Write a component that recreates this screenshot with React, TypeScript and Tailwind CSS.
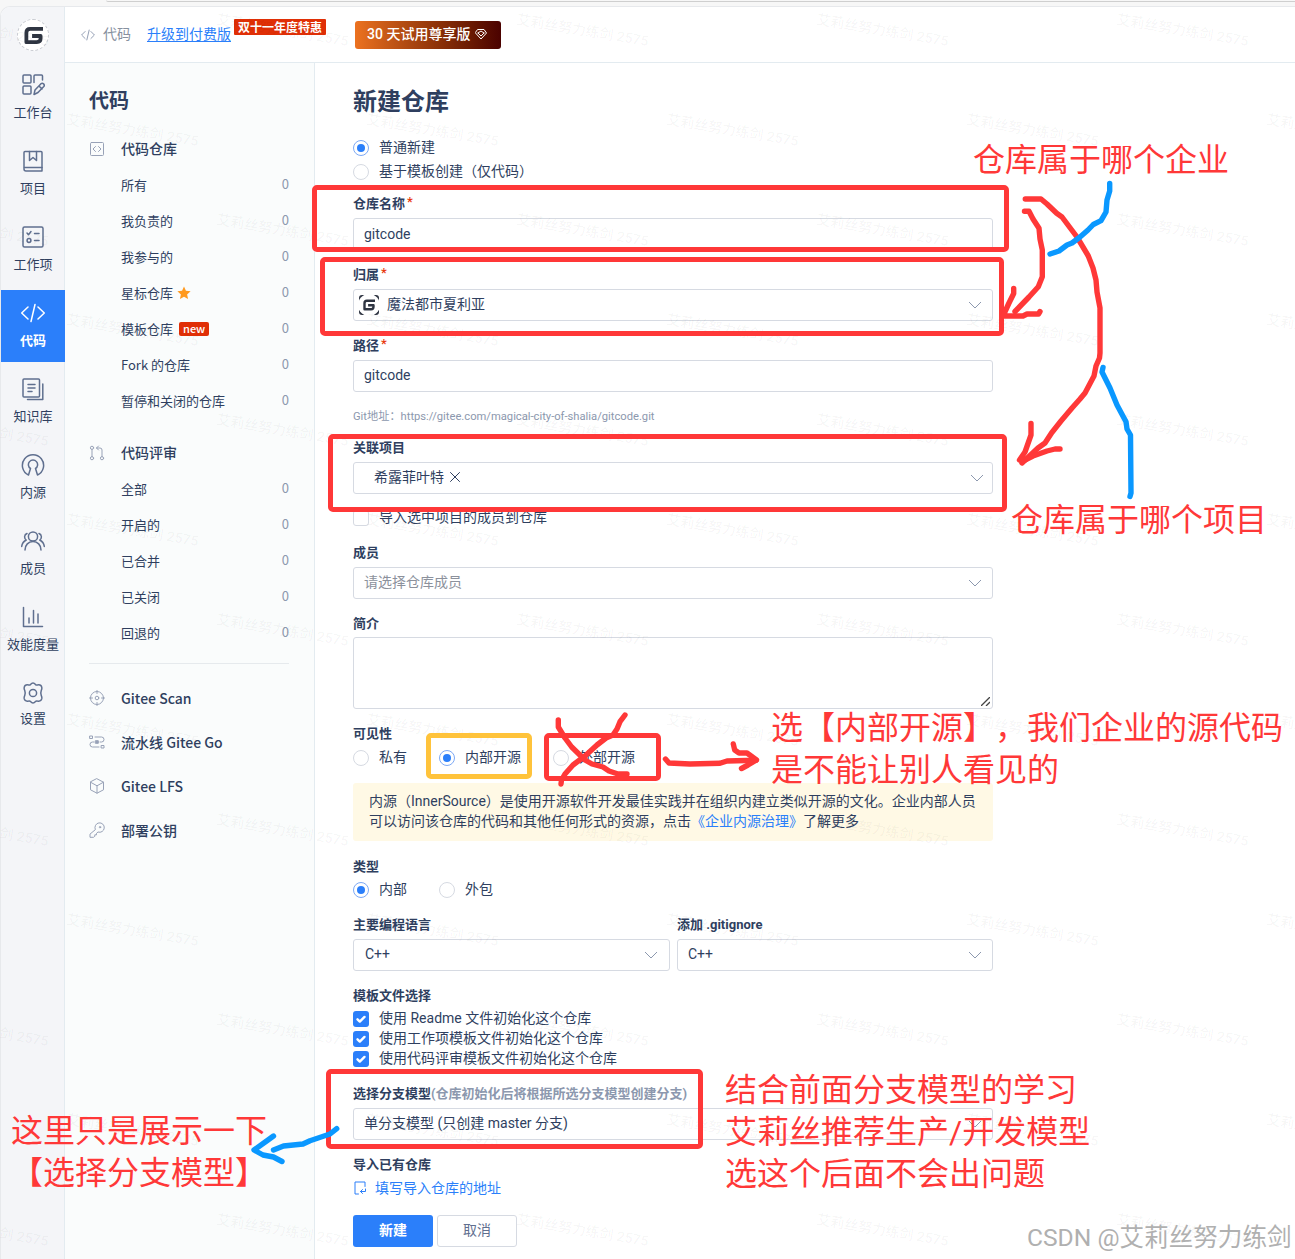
import type { ReactNode } from 'react';
import clsx from 'clsx';

function Glyph({ size, box = 24, width = 1.5, className, children }: { size: number; box?: number; width?: number; className?: string; children: ReactNode }) {
    return (
        <svg
            width={size}
            height={size}
            viewBox={`0 0 ${box} ${box}`}
            fill="none"
            stroke="currentColor"
            strokeWidth={width}
            strokeLinecap="round"
            strokeLinejoin="round"
            className={clsx('shrink-0', className)}
        >
            {children}
        </svg>
    );
}

const railItems = [
    {
        label: '工作台',
        icon: (
            <>
                <rect x="2" y="2" width="8" height="8" rx="1" />
                <path d="M21.5 7V3a1 1 0 0 0-1-1h-6.5a1 1 0 0 0-1 1v6.500" />
                <rect x="2" y="13" width="8" height="8" rx="1" />
                <path d="M13 21.500l1-4.500 6-6.300q1.300-1 2.600.2 1.300 1.300.2 2.600l-5.800 6zM18 13l3 3" />
            </>
        ),
    },
    {
        label: '项目',
        icon: (
            <>
                <path d="M4 2.500h16a1 1 0 0 1 1 1V22H5a2 2 0 0 1-2-2V3.500a1 1 0 0 1 1-1z" />
                <path d="M8.500 2.500v9l3.500-3 3.500 3v-9M3.500 18.500H21" />
            </>
        ),
    },
    {
        label: '工作项',
        icon: (
            <>
                <rect x="2" y="2" width="20" height="20" rx="1.500" />
                <path d="M6 8l1.500 1.700L10 6.500M13.500 8.500H18M13.500 15.500H18" />
                <circle cx="8" cy="15.500" r="1.900" />
            </>
        ),
    },
    {
        label: '代码',
        icon: <path d="M7 6l-6.300 6L7 18M17 6l6.300 6L17 18M14 3.500l-4 17" />,
    },
    {
        label: '知识库',
        icon: (
            <>
                <rect x="2" y="2" width="16.500" height="18" rx="1" />
                <path d="M21.800 7v15.500H6.500M7 7.500h7M7 11h7M7 14.500h4" />
            </>
        ),
    },
    {
        label: '内源',
        icon: <path d="M7.500 22A10.600 10.600 0 1 1 16.500 22l-2-6.500a4.600 4.600 0 1 0-5 0z" />,
    },
    {
        label: '成员',
        icon: (
            <>
                <circle cx="12" cy="7.500" r="4.600" />
                <path d="M4 21c0-5 3.500-8.500 8-8.500s8 3.500 8 8.500M6 4.500c-3 1-3 5-.8 6.500C2.500 12.500 1 14.500.700 17.500M18 4.500c3 1 3 5 .8 6.500 2.700 1.500 4.200 3.500 4.500 6.500" />
            </>
        ),
    },
    {
        label: '效能度量',
        icon: <path d="M2.500 2.500v19h19M8 13v5M12.500 5.500V18M17 9v9" />,
    },
    {
        label: '设置',
        icon: (
            <>
                <path d="M9.500 3.500q2.500-3 5 0 .7.800 1.800.5 3.800-.8 4.500 2.300.3 1.500-.5 3-1 2.700 0 5.400.8 1.500.5 3-.7 3.100-4.500 2.300-1.100-.3-1.800.5-2.500 3-5 0-.7-.800-1.800-.5-3.800.8-4.500-2.300-.3-1.500.5-3 1-2.700 0-5.400-.8-1.500-.5-3 .7-3.100 4.500-2.300 1.100.3 1.800-.5z" />
                <circle cx="12" cy="12" r="3.600" />
            </>
        ),
    },
];

const codeRows = [
    { label: '所有' },
    { label: '我负责的' },
    { label: '我参与的' },
    { label: '星标仓库', star: true },
    { label: '模板仓库', isNew: true },
    { label: 'Fork 的仓库' },
    { label: '暂停和关闭的仓库' },
];

const reviewRows = [{ label: '全部' }, { label: '开启的' }, { label: '已合并' }, { label: '已关闭' }, { label: '回退的' }];

const tools = [
    {
        label: 'Gitee Scan',
        icon: (
            <>
                <circle cx="8" cy="8" r="6.500" />
                <circle cx="8" cy="8" r="1.800" />
                <path d="M8 .5v3M8 12.500v3M.5 8h3M12.500 8h3" />
            </>
        ),
    },
    {
        label: '流水线 Gitee Go',
        icon: (
            <>
                <path d="M1 2h2.500v2.500H1zM12.500 11.500H15V14h-2.500zM6 3h6.500a2.500 2.500 0 0 1 0 5H11M10 13H3.500a2.500 2.500 0 0 1 0-5H5" />
                <rect x="6.700" y="6.700" width="2.600" height="2.600" fill="currentColor" />
            </>
        ),
    },
    {
        label: 'Gitee LFS',
        icon: <path d="M8 .8l6.500 3.400v7.600L8 15.200l-6.500-3.400V4.200zM1.500 4.200L8 7.800l6.500-3.600M8 7.800v7.400" />,
    },
    {
        label: '部署公钥',
        icon: (
            <>
                <path d="M6.200 7.300A4.700 4.700 0 1 1 9 10L7.500 11.300v1.500H5.800v1.500L4.500 15.300H1v-2.800z" />
                <circle cx="11" cy="5.200" r=".7" />
            </>
        ),
    },
];

function Logo({ className }: { className?: string }) {
    return (
        <svg viewBox="0 0 20 20" className={className} fill="none" stroke="#2f3542" strokeWidth="4" strokeLinejoin="round">
            <path d="M20 3H6.500Q2.500 3 2.500 7V17H13.500q4 0 4-4v-2.500H8.500" />
        </svg>
    );
}

function NavGroup({ title, icon, rows }: { title: string; icon: ReactNode; rows: { label: string; star?: boolean; isNew?: boolean }[] }) {
    return (
        <section>
            <h3 className="flex h-9 items-center text-sm font-medium">
                <Glyph size={16} box={16} width={1} className="mr-4 text-[#98a2b7]">
                    {icon}
                </Glyph>
                <span className="pb-0.5">{title}</span>
            </h3>
            {rows.map((row) => (
                <div key={row.label} className="flex h-9 items-center pl-8 text-[13px]">
                    <span className="pb-px">{row.label}</span>
                    {row.star && (
                        <svg viewBox="0 0 24 24" className="ml-1 size-[14px] fill-[#ff9a1f]">
                            <path d="M12 1l3.300 7.300 8 .9-6 5.300 1.700 7.900-7-4-7 4 1.700-7.900-6-5.300 8-.9z" />
                        </svg>
                    )}
                    {row.isNew && <span className="ml-1.5 h-[14px] rounded-[2px] bg-[#e02f06] px-1 text-[11px] leading-[13px] font-medium text-white">new</span>}
                    <span className="ml-auto pb-0.5 text-[#8c98ae]">0</span>
                </div>
            ))}
        </section>
    );
}

function Label({ children, required }: { children: ReactNode; required?: boolean }) {
    return (
        <div className="h-[39px] pt-[15px] text-[13px] leading-5 font-bold">
            {children}
            {required && <span className="relative -top-0.5 ml-0.5 font-medium text-[#e8380d]">*</span>}
        </div>
    );
}

function Chevron() {
    return (
        <svg width="14" height="8" viewBox="0 0 14 8" fill="none" stroke="#8c98ae" className="ml-auto shrink-0">
            <path d="M1 1l6 6 6-6" />
        </svg>
    );
}

function Field({ children, select, className = 'px-[10px]' }: { children?: ReactNode; select?: boolean; className?: string }) {
    return (
        <div className={clsx('flex h-8 items-center rounded-[3px] border border-[#d6dae2] text-sm', className)}>
            <span className="flex items-center pb-0.5">{children}</span>
            {select && <Chevron />}
        </div>
    );
}

function Radio({ checked, children }: { checked?: boolean; children: ReactNode }) {
    return (
        <label className="flex h-5 shrink-0 items-center text-sm">
            <span className={clsx('mr-[10px] flex size-4 items-center justify-center rounded-full border bg-white', checked ? 'border-[#7da9f5]' : 'border-[#d6dae2]')}>
                {checked && <span className="size-2 rounded-full bg-[#2b7ffa]" />}
            </span>
            <span className="-mt-0.5">{children}</span>
        </label>
    );
}

function Check({ checked, children }: { checked?: boolean; children: ReactNode }) {
    return (
        <label className="flex h-5 items-center text-sm">
            <span className={clsx('mr-[10px] flex size-4 items-center justify-center rounded-[3px]', checked ? 'bg-[#2b7ffa]' : 'border border-[#d6dae2]')}>
                {checked && (
                    <Glyph size={12} box={12} width={2.4} className="text-white">
                        <path d="M2.500 6.300l2.300 2.300 4.700-4.700" />
                    </Glyph>
                )}
            </span>
            <span className="-mt-0.5">{children}</span>
        </label>
    );
}

// repeating account stamp, rows are 100px apart and shifted by half a column
function Stamp() {
    const rows = Array.from({ length: 13 }, (_, i) => i);
    const cols = Array.from({ length: 5 }, (_, i) => i);
    return (
        <svg className="pointer-events-none absolute inset-0" width="1295" height="1259" fill="#000" fillOpacity="0.045">
            {rows.map((r) =>
                cols.map((c) => {
                    const x = c * 300 + (r % 2 ? 66 : -84);
                    const y = r * 100 + 24;
                    return (
                        <text key={`${r}-${c}`} x={x} y={y} transform={`rotate(9.5 ${x} ${y})`} className="text-sm font-medium">
                            艾莉丝努力练剑 2575
                        </text>
                    );
                }),
            )}
        </svg>
    );
}

const notes = [
    { lines: ['仓库属于哪个企业'], pos: 'left-[973px] top-[139px]' },
    { lines: ['仓库属于哪个项目'], pos: 'left-[1011px] top-[499px]' },
    { lines: ['选【内部开源】，我们企业的源代码', '是不能让别人看见的'], pos: 'left-[771px] top-[707px]' },
    { lines: ['结合前面分支模型的学习', '艾莉丝推荐生产/开发模型', '选这个后面不会出问题'], pos: 'left-[725px] top-[1069px]' },
    { lines: ['这里只是展示一下', '【选择分支模型】'], pos: 'left-[11px] top-[1110px]' },
];

const frames = [
    'left-[312px] top-[185px] h-[67px] w-[697px] border-[#ff3838]',
    'left-[320px] top-[257px] h-[79px] w-[684px] border-[#ff3838]',
    'left-[328px] top-[434px] h-[78px] w-[679px] border-[#ff3838]',
    'left-[426px] top-[733px] h-[46px] w-[106px] border-[#ffc33b]',
    'left-[544px] top-[733px] h-[48px] w-[117px] border-[#ff3838]',
    'left-[326px] top-[1069px] h-[80px] w-[377px] border-[#ff3838]',
];

function Annotations() {
    return (
        <>
            {frames.map((f) => (
                <div key={f} className={clsx('absolute rounded-[5px] border-5', f)} />
            ))}
            <svg className="absolute inset-0" width="1295" height="1259" fill="none" strokeWidth="5.4" strokeLinecap="round" strokeLinejoin="round">
                <g stroke="#ff3838">
                    <path d="M1025.300 199H1041L1047 204L1056.700 213.300L1062 217L1068 225L1077 237L1088.300 256L1093 268L1096 280L1097 292L1100 308V353L1099.500 358L1096 366L1094 376L1085 393L1080 399L1072 408L1061 421L1051.700 432.700L1045 443L1038 448L1022 463" />
                    <path d="M1031 423.500V435L1025 452L1019.500 460L1023 461L1033 456L1047 451L1055 449H1060" />
                    <path d="M1024.500 211.300H1029L1033 219L1039 228.300L1040 239L1042.300 250V276.700L1038.300 286.700L1029 297L1015 311.500" />
                    <path d="M1013.700 288.500V293.500L1009 303L1003 316H1023L1027 314H1038.500L1040 311.500" />
                    <path d="M558.300 720V727L565 738L571.700 747L585 760L592 764L603 767L609 771L618 774H627" />
                    <path d="M625 715L620 721.700L617 729L613 735L606 738L597 745L585 756L573 765L565 774L561.500 780L561 784" />
                    <path d="M665.500 759L669 763L690 764L720 763.300L727 761L756 760.300" />
                    <path d="M733.300 744L734.700 750L739 753H747L756.500 760L748 765L741.500 768.500" />
                </g>
                <g stroke="#0a98ff">
                    <path d="M1109.700 183.500V191L1107 200L1106 212L1101 220.700L1093.300 224.500L1088 230L1080 237L1072 243L1067 245L1059 251L1050 254" />
                    <path d="M1103 367.500L1102 372L1110 388L1117 405L1126 421.700L1127 429L1130.500 435L1131 493L1130 496.500" />
                    <path d="M336.700 1128.700L330 1134L310 1140.700L303 1144L283.500 1146L273.500 1150" />
                    <path d="M273.500 1136L268 1140L254 1150L263 1155L273.500 1157L282 1161.500" />
                </g>
            </svg>
            {notes.map((n) => (
                <div key={n.pos} className={clsx('absolute text-[32px] leading-[42px] whitespace-nowrap text-[#ff3838] [text-spacing-trim:space-all]', n.pos)}>
                    {n.lines.map((l) => (
                        <p key={l}>{l}</p>
                    ))}
                </div>
            ))}
            <p className="absolute top-[1220px] left-[1027px] text-[24.6px] leading-9 whitespace-nowrap text-[#b0b0b0] [text-shadow:1px_1px_1px_#fff]">CSDN @艾莉丝努力练剑</p>
        </>
    );
}

export default function App() {
    return (
        <div className="relative flex h-[1259px] w-[1295px] flex-col overflow-hidden bg-[#f7f7f7] font-['Roboto','Noto_Sans_CJK_SC',sans-serif] text-[#2f3f5f]">
            <div className="h-1.5 shrink-0 pl-[106px]">
                <div className="h-0.5 rounded-bl-lg border-b border-[#cfcfcf]" />
            </div>

            <div className="flex min-h-0 flex-1 overflow-hidden rounded-tl-[10px] border-t border-l border-[#e7e9ec] bg-white">
                <nav className="flex w-16 shrink-0 flex-col border-r border-[#e3ebf0] bg-[#f4f5f8] font-['Noto_Sans_CJK_SC',sans-serif]">
                    <div className="mt-3 mb-[11px] ml-4 flex size-8 shrink-0 items-center justify-center rounded-full border border-dashed border-[#c9ccd2] bg-white">
                        <Logo className="size-[19px]" />
                    </div>
                    <div className="-mr-px flex flex-col gap-1">
                        {railItems.map((item) => {
                            const active = item.label === '代码';
                            return (
                                <div key={item.label} className={clsx('flex h-[72px] flex-col items-center pt-[11px]', active && 'bg-[#2b7ffa] font-bold text-white')}>
                                    <Glyph size={24} className={active ? 'text-white' : 'text-[#5f6f8f]'}>
                                        {item.icon}
                                    </Glyph>
                                    <span className={clsx('text-[13px] leading-5 whitespace-nowrap', item.label === '设置' ? 'mt-[3px]' : 'mt-[5px]')}>{item.label}</span>
                                </div>
                            );
                        })}
                    </div>
                </nav>

                <div className="flex min-w-0 flex-1 flex-col">
                    <header className="flex h-14 shrink-0 items-center border-b border-[#e3ebf0] pl-4 font-['Noto_Sans_CJK_SC',sans-serif] text-sm">
                        <Glyph size={14} width={1.6} className="mr-2 text-[#8c98ae]">
                            <path d="M7 6l-6 6 6 6M17 6l6 6-6 6M14 3.500l-4 17" />
                        </Glyph>
                        <span className="mb-[3px] text-[#87919f]">代码</span>
                        <a className="mb-[3px] ml-4 text-[#2b7ffa] underline underline-offset-2">升级到付费版</a>
                        <span className="mb-[15px] ml-[3px] h-4 rounded-[1px] bg-[#e02f06] px-1 text-xs leading-[15px] font-bold text-white">双十一年度特惠</span>
                        <button className="ml-[29px] flex h-7 w-[146px] items-center rounded-[3px] bg-linear-to-r from-[#ec7220] to-[#4b0200] pb-0.5 pl-3 font-['Roboto','Noto_Sans_CJK_SC',sans-serif] font-medium text-white">
                            30 天试用尊享版
                            <Glyph size={12} width={2} className="ml-[5px]">
                                <path d="M6 3h12l5 7-11 12L1 10zM6 10l6 6 6-6M6 10l6-4 6 4" />
                            </Glyph>
                        </button>
                    </header>

                    <div className="flex min-h-0 flex-1">
                        <aside className="w-[250px] shrink-0 border-r border-[#e3ebf0] bg-[#fafcfc] pr-[25px] pl-6 font-['Noto_Sans_CJK_SC',sans-serif]">
                            <h2 className="mt-[22px] mb-4 text-xl leading-[30px] font-bold">代码</h2>
                            <NavGroup
                                title="代码仓库"
                                rows={codeRows}
                                icon={
                                    <>
                                        <rect x="1.500" y="1.500" width="13" height="13" rx="1" />
                                        <path d="M6.500 5.500L4 8l2.500 2.500M9.500 5.500L12 8l-2.500 2.500" />
                                    </>
                                }
                            />
                            <div className="h-4" />
                            <NavGroup
                                title="代码评审"
                                rows={reviewRows}
                                icon={
                                    <>
                                        <circle cx="3" cy="2.800" r="1.600" />
                                        <circle cx="3" cy="13.200" r="1.600" />
                                        <circle cx="13" cy="13.200" r="1.600" />
                                        <path d="M3 4.500v7M13 11.500V5q0-2-2-2H7.500M9.500 1l-2 2 2 2" />
                                    </>
                                }
                            />
                            <div className="mt-3 mb-3 border-t border-[#e6eaed]" />
                            {tools.map((tool) => (
                                <div key={tool.label} className="flex h-11 items-center text-sm font-medium">
                                    <Glyph size={16} box={16} width={1} className="mr-4 text-[#98a2b7]">
                                        {tool.icon}
                                    </Glyph>
                                    {tool.label}
                                </div>
                            ))}
                        </aside>

                        <main className="w-[678px] pl-[38px]">
                            <h1 className="mt-[21px] text-2xl leading-9 font-bold">新建仓库</h1>
                            <div className="mt-[18px] flex h-[41px] flex-col gap-1">
                                <Radio checked>普通新建</Radio>
                                <Radio>基于模板创建（仅代码）</Radio>
                            </div>

                            <Label required>仓库名称</Label>
                            <Field className="px-[10px] pt-0.5">gitcode</Field>

                            <Label required>归属</Label>
                            <Field select className="pr-[10px] pl-[5px]">
                                <span className="relative top-px mr-2 flex size-5 items-center justify-center overflow-hidden rounded-[3px] bg-[#2f3542]">
                                    <span className="flex size-[22px] shrink-0 items-center justify-center rounded-full bg-white">
                                        <Logo className="size-3" />
                                    </span>
                                </span>
                                魔法都市夏利亚
                            </Field>

                            <Label required>路径</Label>
                            <Field>gitcode</Field>
                            <p className="h-[31px] pt-[15px] text-[11.2px] leading-5 text-[#8c98ae]">Git地址：https://gitee.com/magical-city-of-shalia/gitcode.git</p>

                            <Label>关联项目</Label>
                            <Field select className="pr-2 pl-5">
                                希露菲叶特
                                <Glyph size={10} box={10} width={1} className="ml-1.5">
                                    <path d="M.5.5l9 9M9.500.5l-9 9" />
                                </Glyph>
                            </Field>
                            <div className="h-[34px] pt-[14px]">
                                <Check>导入选中项目的成员到仓库</Check>
                            </div>

                            <Label>成员</Label>
                            <Field select>
                                <span className="text-[#8c919c]">请选择仓库成员</span>
                            </Field>

                            <Label>简介</Label>
                            <div className="-mt-px flex h-[72px] items-end justify-end rounded-[3px] border border-[#d6dae2] p-0.5">
                                <svg width="9" height="9" stroke="#444" strokeWidth="1.3" fill="none">
                                    <path d="M0 9L9 0M5 9l4-4" />
                                </svg>
                            </div>

                            <Label>可见性</Label>
                            <div className="flex h-[35px] gap-8">
                                <Radio>私有</Radio>
                                <Radio checked>内部开源</Radio>
                                <Radio>外部开源</Radio>
                            </div>
                            <p className="h-[58px] rounded-[3px] bg-[#fff9e5] px-4 pt-2 text-sm leading-5 whitespace-nowrap">
                                内源（InnerSource）是使用开源软件开发最佳实践并在组织内建立类似开源的文化。企业内部人员
                                <br />
                                可以访问该仓库的代码和其他任何形式的资源，点击<a className="text-[#2b7ffa]">《企业内源治理》</a>了解更多
                            </p>

                            <div className="h-px" />
                            <Label>类型</Label>
                            <div className="-mt-px flex h-5 gap-8">
                                <Radio checked>内部</Radio>
                                <Radio>外包</Radio>
                            </div>

                            <div className="grid grid-cols-[317px_316px] gap-x-[7px]">
                                <Label>主要编程语言</Label>
                                <Label>添加 .gitignore</Label>
                                <Field select className="px-[11px]">C++</Field>
                                <Field select>C++</Field>
                            </div>

                            <Label>模板文件选择</Label>
                            <div className="-mt-px">
                                <Check checked>使用 Readme 文件初始化这个仓库</Check>
                                <Check checked>使用工作项模板文件初始化这个仓库</Check>
                                <Check checked>使用代码评审模板文件初始化这个仓库</Check>
                            </div>

                            <Label>
                                选择分支模型<span className="text-[#8c98ae]">(仓库初始化后将根据所选分支模型创建分支)</span>
                            </Label>
                            <Field select>单分支模型 (只创建 master 分支)</Field>

                            <Label>导入已有仓库</Label>
                            <a className="-mt-px flex h-5 items-center text-sm text-[#2b7ffa]">
                                <Glyph size={14} box={14} width={1} className="mr-2">
                                    <path d="M12 5.500V1H2v12h3.500M12.500 8v2.500H7.500M9.500 8.500l-2 2 2 2" />
                                </Glyph>
                                填写导入仓库的地址
                            </a>

                            <div className="mt-[17px] flex gap-1 text-sm">
                                <button className="h-8 w-20 rounded-[3px] bg-[#2b7ffa] pb-0.5 font-bold text-white">新建</button>
                                <button className="h-8 w-20 rounded-[3px] border border-[#d6dae2] pb-0.5 text-[#5f6f8f]">取消</button>
                            </div>
                        </main>
                    </div>
                </div>
            </div>

            <Stamp />
            <Annotations />
        </div>
    );
}
